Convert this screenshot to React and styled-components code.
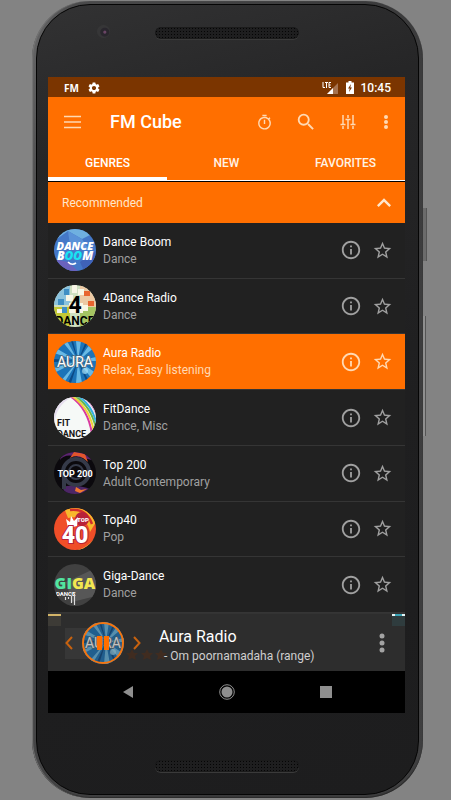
import React, { useState } from "react";
import styled, { createGlobalStyle } from "styled-components";
import {
  MdSettings,
  MdSearch,
  MdOutlineTimer,
  MdKeyboardArrowUp,
  MdInfoOutline,
  MdStarBorder,
} from "react-icons/md";

const orange = "#ff6f00";
const cream = "#ffd9b3";

const GlobalStyle = createGlobalStyle`
  * { box-sizing: border-box; }
  body {
    margin: 0;
    background: #838383;
    font-family: Roboto, "Liberation Sans", sans-serif;
    -webkit-font-smoothing: antialiased;
  }
  button {
    font: inherit;
    color: inherit;
    background: none;
    border: 0;
    padding: 0;
    cursor: pointer;
  }
  svg { display: block; }
`;

const Page = styled.div`
  min-height: 100vh;
  display: flex;
  padding: 1px 28px 2px 32px;
`;

const Phone = styled.div`
  position: relative;
  flex: 1;
  min-width: 0;
  display: flex;
  padding: 3px 4px 3px 4px;
  border-radius: 58px;
  background: linear-gradient(100deg, #6a6a6b 0%, #4a4a4b 8%, #3a3a3b 60%, #3f3f40 100%);
  box-shadow: inset 1px 0 1px #777, inset 0 -1px 1px #222;
`;

const SideKey = styled.span`
  position: absolute;
  left: 100%;
  top: ${(p) => p.$top}px;
  width: ${(p) => p.$width}px;
  height: ${(p) => p.$height}px;
  background: ${(p) => p.$fill};
  border-right: 1px solid #555;
`;

const Body = styled.div`
  flex: 1;
  min-width: 0;
  display: flex;
  flex-direction: column;
  padding: 0 13px 0 11px;
  border: 1px solid #050505;
  border-radius: 54px;
  background: linear-gradient(165deg, #323233 0%, #262627 18%, #1f1f20 55%, #1d1d1e 100%);
`;

const TopBezel = styled.div`
  height: 72px;
  display: grid;
  grid-template-columns: 1fr 144px 1fr;
  align-items: center;
  padding-bottom: 16px;
`;

const Camera = styled.span`
  justify-self: center;
  width: 13px;
  height: 13px;
  margin: 0 0 3px 4px;
  border-radius: 50%;
  background: radial-gradient(circle at 60% 55%, #6a4565 0 1px, #29262d 2px 4px, #363637 5px);
`;

const Speaker = styled.span`
  grid-column: 2;
  height: 12px;
  border-radius: 6px;
  background-color: #1e1e1f;
  background-image: radial-gradient(circle, #050505 0 1px, transparent 1px);
  background-size: 3px 3px;
  box-shadow: 0 1px 0 #3a3a3a, inset 0 0 1px #000;
`;

const BottomBezel = styled.div`
  height: 81px;
  display: grid;
  grid-template-columns: 1fr 144px 1fr;
  align-items: center;
  padding-top: 24px;
`;

const Screen = styled.main`
  flex: 1;
  min-height: 0;
  display: flex;
  flex-direction: column;
  background: #212121;
  color: #fff;
`;

const StatusBar = styled.div`
  height: 20px;
  display: flex;
  align-items: center;
  gap: 8px;
  padding: 1px 14px 0 16px;
  background: #7b3500;
  font-size: 12px;
  font-weight: 500;
`;

const FmBadge = styled.span`
  font: 700 10px "Noto Sans", sans-serif;
`;

const StatusEnd = styled.div`
  margin-left: auto;
  display: flex;
  align-items: center;
  gap: 7px;
`;

const Toolbar = styled.header`
  height: 48px;
  display: flex;
  align-items: center;
  padding: 2px 14px 0 15px;
  background: ${orange};
  color: ${cream};
`;

const Title = styled.h1`
  flex: 1;
  margin: 0 0 0 29px;
  font-size: 18px;
  font-weight: 500;
  line-height: 24px;
  color: #fff;
`;

const ToolbarActions = styled.div`
  display: flex;
  align-items: center;
  gap: 24px;
`;

const IconButton = styled.button`
  position: relative;
  display: flex;
  flex: none;
  align-items: center;
  justify-content: center;
  width: ${(p) => p.$width || p.$size || 18}px;
  height: ${(p) => p.$size || 18}px;
  svg { flex: none; }
`;

const Tabs = styled.div`
  height: 36px;
  display: grid;
  grid-template-columns: repeat(3, 1fr);
  background: ${orange};
  border-bottom: 1px solid #fff;
`;

const Tab = styled.button`
  padding: 3px 0 0;
  border-bottom: 3px solid ${(p) => (p.$active ? "#fff" : "transparent")};
  font-size: 12px;
  font-weight: 500;
  color: ${(p) => (p.$active ? "#fff" : "#fff3e6")};
`;

const GroupHeader = styled.button`
  height: 42px;
  display: flex;
  align-items: center;
  justify-content: space-between;
  padding: 0 7px 0 14px;
  border-top: 1px solid #000;
  background: ${orange};
  color: #ffe7cc;
  font-size: 12px;
`;

const List = styled.ul`
  flex: 1;
  min-height: 0;
  display: flex;
  flex-direction: column;
  margin: 0;
  padding: 0;
  list-style: none;
`;

const Row = styled.li`
  flex: 1;
  display: flex;
  align-items: center;
  gap: 7px;
  padding: 0 12px 0 6px;
  border-bottom: 1px solid #353535;
  background: ${(p) => (p.$active ? orange : "#212121")};
  color: ${(p) => (p.$active ? cream : "#a0a0a0")};
`;

const Cover = styled.svg`
  width: 42px;
  height: 42px;
  flex: none;
  border-radius: 50%;
`;

const RowText = styled.div`
  flex: 1;
  min-width: 0;
  padding-top: 1px;
  font-size: 12px;
  line-height: 17px;
`;

const Name = styled.div`
  color: #fff;
`;

const RowActions = styled.div`
  display: flex;
  gap: 9px;
`;

const Player = styled.section`
  position: relative;
  height: 58px;
  display: flex;
  align-items: center;
  padding: 1px 14px 0;
  background: #2d2d2d;
  border-top: 1px solid #333;
  overflow: hidden;
`;

const Residue = styled.svg`
  position: absolute;
  inset: 0;
  width: 100%;
  height: 100%;
`;

const PlayButton = styled.button`
  position: relative;
  width: 42px;
  height: 42px;
  margin: 0 6px;
  border-radius: 50%;
`;

const PlayOverlay = styled.svg`
  position: absolute;
  inset: 0;
`;

const Track = styled.div`
  position: relative;
  flex: 1;
  min-width: 0;
  padding: 5px 0 0 15px;
  font-size: 12px;
  line-height: 18px;
  color: #cfcfcf;
  white-space: nowrap;
`;

const TrackName = styled.div`
  font-size: 16px;
  line-height: 20px;
  color: #fff;
`;

const TrackDetail = styled.div`
  padding-left: 5px;
`;

const PlayerMenu = styled(IconButton)`
  color: #a3a3a3;
`;

const NavBar = styled.nav`
  height: 42px;
  display: grid;
  grid-template-columns: repeat(3, 99px);
  justify-content: center;
  align-items: center;
  justify-items: center;
  background: #000;
  color: #8f8f8f;
`;

const art = {
  boom: (
    <>
      <rect width="42" height="42" fill="#4478c8" />
      <path d="M0 12L14 2l14 8 14-7V0H0z" fill="#6fb0e0" />
      <path d="M14 2l14 8 8 12-20-6z" fill="#5a92d8" />
      <path d="M0 30l14 3 10 9H0z" fill="#6a62bd" />
      <path d="M42 22L26 33l4 9h12z" fill="#3f62b8" />
      <g fill="#fff" fontFamily="Open Sans, sans-serif" fontWeight="800" fontStyle="italic">
        <text x="21" y="21" fontSize="11" textAnchor="middle">DANCE</text>
        <text x="21" y="31" fontSize="12" textAnchor="middle">
          B<tspan fill="#18e4f2">OO</tspan>M
        </text>
      </g>
      <path d="M14 33q4 4 8 1" stroke="#fff" strokeWidth="1.6" fill="none" />
    </>
  ),
  four: (
    <>
      <rect width="42" height="42" fill="#cfe0c0" />
      <path d="M0 0h16v20H0z" fill="#8cc3dd" />
      <path d="M26 0h16v22H26z" fill="#ecc9a4" />
      <path d="M0 22h16v20H0z" fill="#c3c935" />
      <path d="M26 22h16v20H26z" fill="#a5c562" />
      <path d="M4 14h6v6H4zM10 4h5v6h-5zM8 22h5v6H8z" fill="#3f8fc4" />
      <path d="M30 6h6v5h-6zM34 16h6v5h-6z" fill="#e8642f" />
      <path d="M12 10h7v6h-7zM24 4h6v6h-6zM28 20h6v6h-6zM3 24h5v4H3zM18 0h5v8h-5zM15 18h14v10H15z" fill="#f8f6e6" />
      <text x="21" y="28" fontSize="23" fontWeight="700" fontFamily="Roboto, sans-serif" textAnchor="middle">4</text>
      <text x="21" y="40" fontSize="12" fontWeight="700" fontFamily="Roboto, sans-serif" textAnchor="middle">DANCE</text>
    </>
  ),
  aura: (
    <>
      <rect width="42" height="42" fill="#1c74b8" />
      <path d="M24 20L0 6v6zM24 20L8 0h5zM24 20L22 0h5zM24 20L38 0l4 5zM24 20l18-4v4zM24 20l18 12-4 6zM24 20l4 22h-6zM24 20L10 42H5zM24 20L0 32v-5z" fill="#69b9e4" />
      <path d="M24 20L0 18v3zM24 20L17 0h2zM24 20L32 0h3zM24 20l12 22h-3zM24 20L17 42h-3z" fill="#0c4a86" />
      <circle cx="31" cy="30" r="3" fill="#a8e2f8" opacity=".7" />
      <text x="21" y="26" fontSize="14" fontFamily="Roboto, sans-serif" textAnchor="middle" fill="#fff" stroke="#526977" strokeWidth="1.5" paintOrder="stroke">AURA</text>
    </>
  ),
  fit: (
    <>
      <rect width="42" height="42" fill="#f6f9f7" />
      <path d="M0 28Q2 8 18 0h-8Q0 8 0 14z" fill="#e7dfef" />
      <g fill="none" strokeWidth="2">
        <path d="M16-1q18 12 22 38" stroke="#d83aa0" />
        <path d="M18-1q18 12 22 36" stroke="#f0cf38" />
        <path d="M20-2q18 12 22 34" stroke="#67b84a" />
        <path d="M23-2q15 10 19 27" stroke="#35aee0" />
        <path d="M27-2q11 7 15 18" stroke="#d98ccf" />
      </g>
      <g fontFamily="Roboto, sans-serif" fontWeight="700" fill="#161616">
        <text x="3" y="29" fontSize="9">FIT</text>
        <text x="3" y="40" fontSize="9">DANCE</text>
      </g>
    </>
  ),
  top200: (
    <>
      <rect width="42" height="42" fill="#0b090d" />
      <path d="M6 8Q10 2 20 4t18 4L34 0H8z" fill="#5c2470" />
      <path d="M16 6q7-4 13 0l5 4-3-8-11-2z" fill="#e2552c" />
      <path d="M8 35q12-4 28 2l-8 5H12z" fill="#4c2666" />
      <path d="M22 35l5 3 6-1-7 4-5-2z" fill="#f07830" />
      <circle cx="22" cy="20" r="13" fill="none" stroke="#353a49" strokeWidth="4" />
      <circle cx="22" cy="20" r="7" fill="none" stroke="#353a49" strokeWidth="2" />
      <path d="M8 22v15h4V28z" fill="#353a49" />
      <text x="21" y="25" fontSize="9" fontWeight="700" fontFamily="Roboto, sans-serif" textAnchor="middle" fill="#fff">TOP 200</text>
    </>
  ),
  top40: (
    <>
      <rect width="42" height="42" fill="#f04e28" />
      <path d="M10 0Q30-6 42 14L36 24Q32 6 14 10z" fill="#f8b72c" />
      <path d="M16 2q16-2 22 14" stroke="#d22d2c" strokeWidth="2.5" fill="none" />
      <path d="M42 28q-6 10-18 14h12z" fill="#f9c33b" />
      <circle cx="28" cy="11" r="7" fill="#b82239" />
      <path d="M12 11l4 3 1-6 3 5 4-4-1 9-9 2z" fill="#fff" />
      <text x="29" y="14" fontSize="6" fontWeight="900" fontFamily="Roboto, sans-serif" textAnchor="middle" fill="#fff">TOP</text>
      <g fontSize="23" fontWeight="900" fontFamily="Roboto, sans-serif" textAnchor="middle">
        <text x="21" y="35" fill="#fff" stroke="#b82239" strokeWidth="2" paintOrder="stroke">40</text>
      </g>
    </>
  ),
  giga: (
    <>
      <rect width="42" height="42" fill="#414141" />
      <path d="M42 4L12 18l6 20 24-6z" fill="#575757" />
      <g fontFamily="Open Sans, sans-serif" fontWeight="800" fontSize="16">
        <text x="21" y="25" textAnchor="middle" fill="#52e5a0">
          GI<tspan fill="#f2e750">GA</tspan>
        </text>
      </g>
      <text x="2" y="32" fontSize="6" fontWeight="700" fontFamily="Roboto, sans-serif" fill="#fff">DANCE</text>
      <path d="M11.500 33v3M14.500 33v2M17.500 32v7M20.500 30v11" stroke="#ddd" strokeWidth="1.200" />
    </>
  ),
};

const stations = [
  { name: "Dance Boom", genre: "Dance", cover: "boom" },
  { name: "4Dance Radio", genre: "Dance", cover: "four" },
  { name: "Aura Radio", genre: "Relax, Easy listening", cover: "aura" },
  { name: "FitDance", genre: "Dance, Misc", cover: "fit" },
  { name: "Top 200", genre: "Adult Contemporary", cover: "top200" },
  { name: "Top40", genre: "Pop", cover: "top40" },
  { name: "Giga-Dance", genre: "Dance", cover: "giga" },
];

const MenuIcon = () => (
  <svg width="17" height="14" viewBox="0 0 17 14" fill="none" stroke="currentColor" strokeWidth="1.5" aria-hidden="true">
    <path d="M0 1.500h17M0 7h17M0 12.500h17" />
  </svg>
);

const SlidersIcon = () => (
  <svg width="16" height="16" viewBox="0 0 16 16" fill="none" stroke="currentColor" strokeWidth="1.5" aria-hidden="true">
    <path d="M3 1v9M3 12v3M8 1v3M8 6v9M13 1v9M13 12v3M.5 10.500h5M5.500 5.500h5M10.500 10.500h5" />
  </svg>
);

const DotsIcon = ({ step, r }) => (
  <svg width="8" height="22" viewBox="0 0 8 22" fill="currentColor" aria-hidden="true">
    <circle cx="4" cy={11 - step} r={r} />
    <circle cx="4" cy="11" r={r} />
    <circle cx="4" cy={11 + step} r={r} />
  </svg>
);

const SignalIcon = () => (
  <svg width="17" height="14" viewBox="0 0 17 14" aria-label="LTE" role="img">
    <path d="M16 2v11H5z" fill="#a67350" />
    <path d="M11 7v6H5z" fill="#fff" />
    <path d="M1 1v5.500H3M3 1.500H6M4.500 1.500V7M9 1.500H7V6.500H9M7 4H8.700" stroke="#fff" strokeWidth="1" fill="none" />
  </svg>
);

const BatteryIcon = () => (
  <svg width="8" height="13" viewBox="0 0 8 13" aria-hidden="true">
    <path d="M2.500 0h3v1.500H8V13H0V1.500h2.500z" fill="#fff" />
    <path d="M5 3L2 7.500h1.700L3 11l3-4.500H4.300z" fill="#7b3500" />
  </svg>
);

const Chevron = ({ back }) => (
  <svg width="8" height="14" viewBox="0 0 8 14" fill="none" stroke="#c8620f" strokeWidth="2" aria-hidden="true">
    <path d={back ? "M7 1L1.500 7 7 13" : "M1 1l5.500 6L1 13"} />
  </svg>
);

const CoverArt = ({ id }) => (
  <Cover viewBox="0 0 42 42" aria-hidden="true">{art[id]}</Cover>
);

function StationRow({ station, active }) {
  return (
    <Row $active={active}>
      <CoverArt id={station.cover} />
      <RowText>
        <Name>{station.name}</Name>
        {station.genre}
      </RowText>
      <RowActions>
        <IconButton $size={22} aria-label={`About ${station.name}`}>
          <MdInfoOutline size={22} />
        </IconButton>
        <IconButton $size={22} aria-label={`Add ${station.name} to favorites`}>
          <MdStarBorder size={21} />
        </IconButton>
      </RowActions>
    </Row>
  );
}

export default function App() {
  const [tab, setTab] = useState("GENRES");
  return (
    <>
      <GlobalStyle />
      <Page>
        <Phone>
          <SideKey $top={207} $height={53} $width={4} $fill="#6b6b6b" />
          <SideKey $top={315} $height={120} $width={3} $fill="#8f8f8f" />
          <Body>
            <TopBezel>
              <Camera />
              <Speaker />
            </TopBezel>
            <Screen>
              <StatusBar>
                <FmBadge>FM</FmBadge>
                <MdSettings size={14} />
                <StatusEnd>
                  <SignalIcon />
                  <BatteryIcon />
                  <span>10:45</span>
                </StatusEnd>
              </StatusBar>
              <Toolbar>
                <IconButton aria-label="Menu"><MenuIcon /></IconButton>
                <Title>FM Cube</Title>
                <ToolbarActions>
                  <IconButton aria-label="Sleep timer"><MdOutlineTimer size={17} /></IconButton>
                  <IconButton aria-label="Search"><MdSearch size={22} /></IconButton>
                  <IconButton aria-label="Equalizer"><SlidersIcon /></IconButton>
                  <IconButton $width={10} aria-label="More options"><DotsIcon step={5} r={2} /></IconButton>
                </ToolbarActions>
              </Toolbar>
              <Tabs role="tablist">
                {["GENRES", "NEW", "FAVORITES"].map((label) => (
                  <Tab key={label} role="tab" aria-selected={tab === label} $active={tab === label} onClick={() => setTab(label)}>
                    {label}
                  </Tab>
                ))}
              </Tabs>
              <GroupHeader aria-expanded="true">
                Recommended
                <MdKeyboardArrowUp size={28} />
              </GroupHeader>
              <List>
                {stations.map((s) => (
                  <StationRow key={s.name} station={s} active={s.name === "Aura Radio"} />
                ))}
              </List>
              <Player aria-label="Now playing">
                <Residue aria-hidden="true">
                  <rect width="13" height="2" fill="#d3b468" />
                  <rect y="2" width="13" height="10" fill="#3d3b36" />
                  <rect x="17" y="14" width="30" height="31" fill="#373737" />
                  <path d="M84 35l2 4 4 0-3 3 1 4-4-2-4 2 1-4-3-3 4 0zM99 35l2 4 4 0-3 3 1 4-4-2-4 2 1-4-3-3 4 0zM113 35l2 4 4 0-3 3 1 4-4-2-4 2 1-4-3-3 4 0z" fill="#402c20" />
                  <svg x="100%" overflow="visible">
                    <rect x="-13" width="13" height="2" fill="#e6f3f5" />
                    <rect x="-10" width="7" height="2" fill="#39a3b5" />
                    <rect x="-13" y="2" width="13" height="10" fill="#2f3c3e" />
                  </svg>
                </Residue>
                <IconButton $size={14} aria-label="Previous station"><Chevron back /></IconButton>
                <PlayButton aria-label="Pause">
                  <CoverArt id="aura" />
                  <PlayOverlay viewBox="0 0 42 42" aria-hidden="true">
                    <circle cx="21" cy="21" r="21" fill="#2d2d2d" opacity=".3" />
                    <circle cx="21" cy="21" r="20" fill="none" stroke="#f5750f" strokeWidth="2" />
                    <path d="M15 14h5v14h-5zM22 14h5v14h-5z" fill={orange} />
                  </PlayOverlay>
                </PlayButton>
                <IconButton $size={14} aria-label="Next station"><Chevron /></IconButton>
                <Track>
                  <TrackName>Aura Radio</TrackName>
                  <TrackDetail>- Om poornamadaha (range)</TrackDetail>
                </Track>
                <PlayerMenu aria-label="Station options"><DotsIcon step={7} r={2.5} /></PlayerMenu>
              </Player>
              <NavBar>
                <IconButton aria-label="Back">
                  <svg width="12" height="14" viewBox="0 0 12 14"><path d="M11 1v12L1 7z" fill="currentColor" /></svg>
                </IconButton>
                <IconButton aria-label="Home">
                  <svg width="16" height="16" viewBox="0 0 16 16">
                    <circle cx="8" cy="8" r="7.3" fill="none" stroke="currentColor" />
                    <circle cx="8" cy="8" r="5.5" fill="currentColor" />
                  </svg>
                </IconButton>
                <IconButton aria-label="Recent apps">
                  <svg width="12" height="12" viewBox="0 0 12 12"><rect width="12" height="12" fill="currentColor" /></svg>
                </IconButton>
              </NavBar>
            </Screen>
            <BottomBezel>
              <Speaker />
            </BottomBezel>
          </Body>
        </Phone>
      </Page>
    </>
  );
}
